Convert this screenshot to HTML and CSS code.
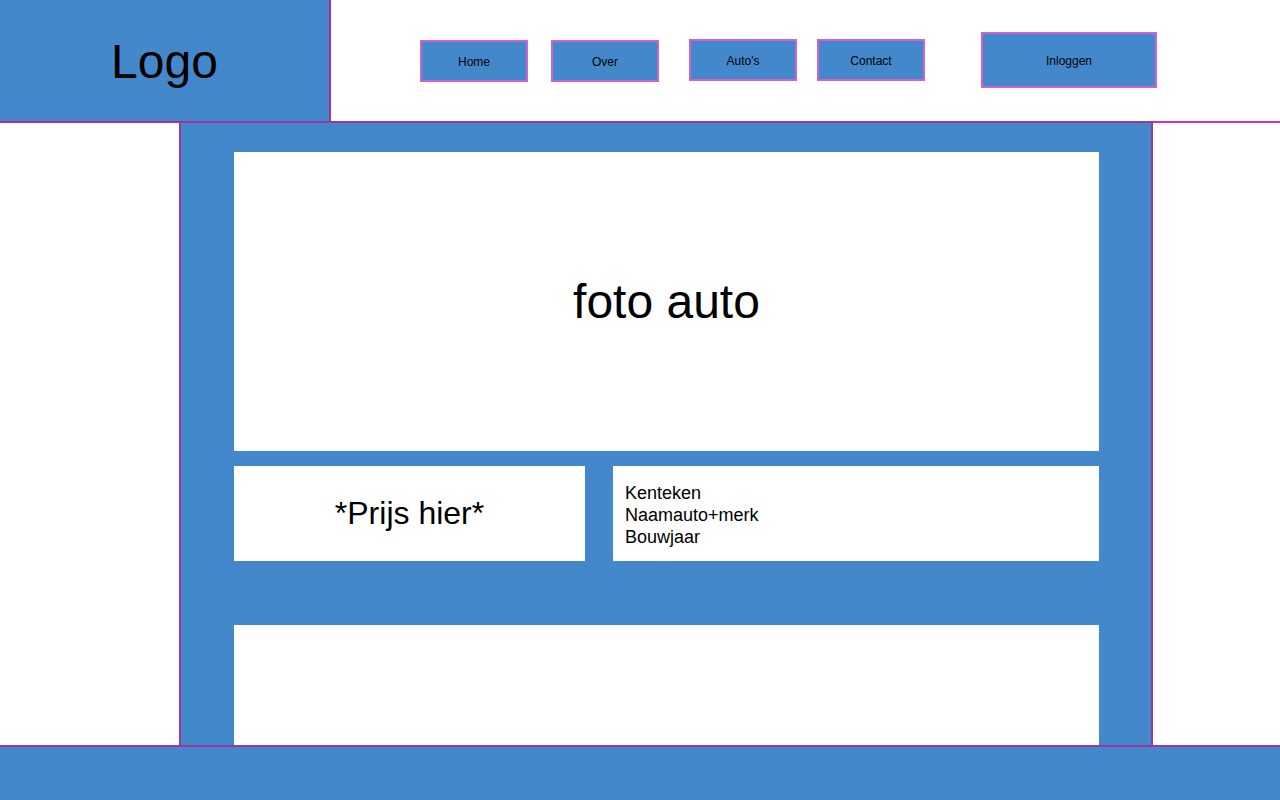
FILE: index.html
```html
<!DOCTYPE html>
<html lang="nl">
<head>
<meta charset="utf-8">
<title>Auto</title>
<link rel="stylesheet" href="styles.css">
</head>
<body>
<header class="header">
  <div class="logo">Logo</div>
  <nav class="nav">
    <a class="btn btn-home" href="#">Home</a>
    <a class="btn btn-over" href="#">Over</a>
    <a class="btn btn-autos" href="#">Auto's</a>
    <a class="btn btn-contact" href="#">Contact</a>
    <a class="btn btn-login" href="#">Inloggen</a>
  </nav>
</header>
<main class="main">
  <div class="photo">foto auto</div>
  <div class="row">
    <div class="price">*Prijs hier*</div>
    <div class="info">
      <span>Kenteken</span>
      <span>Naamauto+merk</span>
      <span>Bouwjaar</span>
    </div>
  </div>
  <div class="extra"></div>
</main>
<footer class="footer"></footer>
</body>
</html>
```

FILE: styles.css
```css
* { box-sizing: border-box; }

html, body {
  margin: 0;
  padding: 0;
  height: 800px;
  overflow: hidden;
  background: #ffffff;
  font-family: "Liberation Sans", Arial, sans-serif;
  color: #000;
}

.header {
  display: flex;
  align-items: flex-start;
  height: 123px;
  border-bottom: 2px solid #cc33cc;
}

.logo {
  width: 331px;
  height: 123px;
  margin-bottom: -2px;
  background: #4488cc;
  border-right: 2px solid #a0359f;
  border-bottom: 2px solid #a0359f;
  display: flex;
  align-items: center;
  justify-content: center;
  font-size: 48px;
  padding-top: 2px;
  position: relative;
  z-index: 2;
}

.nav {
  display: flex;
  align-items: flex-start;
}

.btn {
  display: flex;
  align-items: center;
  justify-content: center;
  width: 108px;
  height: 42px;
  background: #4488cc;
  border: 2px solid #d062d0;
  color: #000;
  text-decoration: none;
  font-size: 12px;
  padding-top: 1px;
}

.btn-home { margin-left: 89px; margin-top: 40px; }
.btn-over { margin-left: 23px; margin-top: 40px; }
.btn-autos { margin-left: 30px; margin-top: 39px; }
.btn-contact { margin-left: 20px; margin-top: 39px; }
.btn-login {
  margin-left: 56px;
  margin-top: 32px;
  width: 176px;
  height: 56px;
}

.main {
  width: 974px;
  height: 624px;
  margin-left: 179px;
  margin-top: -2px;
  background: #4488cc;
  border: 2px solid #a0359f;
  border-bottom: none;
  padding: 29px 52px 0 53px;
  display: flex;
  flex-direction: column;
  overflow: hidden;
  position: relative;
  z-index: 1;
}

.photo {
  height: 299px;
  background: #fff;
  display: flex;
  align-items: center;
  justify-content: center;
  font-size: 48px;
  flex: none;
}

.row {
  display: flex;
  gap: 28px;
  margin-top: 15px;
  height: 95px;
  flex: none;
}

.price {
  width: 351px;
  background: #fff;
  display: flex;
  align-items: center;
  justify-content: center;
  font-size: 32px;
}

.info {
  flex: 1;
  background: #fff;
  display: flex;
  flex-direction: column;
  justify-content: center;
  padding: 3px 12px 0;
  font-size: 18px;
  line-height: 22px;
}

.extra {
  margin-top: 64px;
  height: 120px;
  background: #fff;
  flex: none;
}

.footer {
  height: 55px;
  background: #4488cc;
  border-top: 2px solid #a0359f;
  position: relative;
  z-index: 3;
}
```
